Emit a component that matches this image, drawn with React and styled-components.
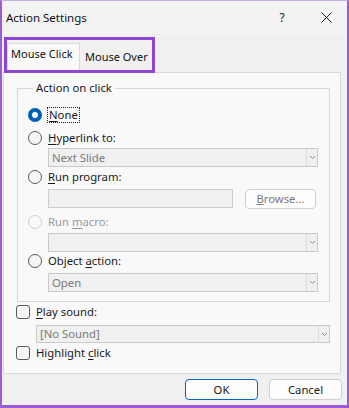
import React from "react";
import styled, { createGlobalStyle } from "styled-components";

const Global = createGlobalStyle`
  html, body { margin: 0; padding: 0; background: #ffffff; }
  body { font-family: "Noto Sans", "Open Sans", sans-serif; }
`;

const purple = "#9b5ad6";

function Radio({ checked, disabled }) {
  return (
    <RadioBox $checked={checked} $disabled={disabled}>
      {checked && <span />}
    </RadioBox>
  );
}

function Select({ value, height }) {
  return (
    <SelectBox $height={height}>
      <span className="value">{value}</span>
      <span className="arrow">
        <svg width="7" height="5" viewBox="0 0 7 5">
          <path d="M1 1 L3.5 3.5 L6 1" fill="none" stroke="#8a8a8a" strokeWidth="1" />
        </svg>
      </span>
    </SelectBox>
  );
}

export default function App() {
  return (
    <>
      <Global />
      <Window>
        <TitleBar>
          <div className="title">Action Settings</div>
          <div className="help">?</div>
          <div className="close">
            <svg width="11" height="11" viewBox="0 0 11 11">
              <path d="M0.5 0.5 L10.5 10.5 M10.5 0.5 L0.5 10.5" stroke="#1a1a1a" strokeWidth="1" />
            </svg>
          </div>
        </TitleBar>

        <TabArea>
          <Tab $active>Mouse Click</Tab>
          <Tab>Mouse Over</Tab>
          <Highlight />
        </TabArea>

        <Panel>
          <Group>
            <Legend>Action on click</Legend>
            <OptionRow>
              <Radio checked />
              <Label $focused><u>N</u>one</Label>
            </OptionRow>
            <OptionRow $gap={5}>
              <Radio />
              <Label><u>H</u>yperlink to:</Label>
            </OptionRow>
            <Indent $gap={1}>
              <Select value="Next Slide" />
            </Indent>
            <OptionRow $gap={1}>
              <Radio />
              <Label><u>R</u>un program:</Label>
            </OptionRow>
            <Indent $gap={3}>
              <ProgramRow>
                <TextInput />
                <Button $small>
                  <u>B</u>rowse...
                </Button>
              </ProgramRow>
            </Indent>
            <OptionRow $gap={4}>
              <Radio disabled />
              <Label $disabled>
                Run <u>m</u>acro:
              </Label>
            </OptionRow>
            <Indent $gap={2}>
              <Select value="" />
            </Indent>
            <OptionRow $gap={0}>
              <Radio />
              <Label>
                Object <u>a</u>ction:
              </Label>
            </OptionRow>
            <Indent $gap={3}>
              <Select value="Open" />
            </Indent>
          </Group>

          <CheckRow $gap={1}>
            <Check />
            <Label><u>P</u>lay sound:</Label>
          </CheckRow>
          <SoundIndent>
            <Select value="[No Sound]" height={18} />
          </SoundIndent>
          <CheckRow $gap={1}>
            <Check />
            <Label>
              Highlight <u>c</u>lick
            </Label>
          </CheckRow>
        </Panel>

        <Footer>
          <Button $primary>OK</Button>
          <Button>Cancel</Button>
        </Footer>
      </Window>
    </>
  );
}

const Window = styled.div`
  box-sizing: border-box;
  width: 349px;
  height: 408px;
  background: #f0f0f0;
  border: 2px solid ${purple};
  border-top: 1px solid #c9b0e8;
  border-bottom-width: 3px;
  display: flex;
  flex-direction: column;
  font-size: 11.3px;
  line-height: 14px;
  color: #1a1a1a;
`;

const TitleBar = styled.div`
  height: 33px;
  flex-shrink: 0;
  display: flex;
  align-items: center;
  background: #f3f3f3;
  padding-left: 4px;

  .title {
    flex: 1;
    font-size: 11.5px;
    color: #111;
  }
  .help {
    width: 20px;
    text-align: center;
    font-size: 12px;
    margin-right: 24px;
  }
  .close {
    width: 20px;
    display: flex;
    justify-content: center;
    align-items: center;
    margin-right: 11px;
  }
`;

const TabArea = styled.div`
  position: relative;
  height: 38px;
  flex-shrink: 0;
  display: flex;
  align-items: flex-end;
  padding-left: 5px;
`;

const Highlight = styled.div`
  position: absolute;
  left: 2px;
  top: 3px;
  width: 151px;
  height: 36px;
  box-sizing: border-box;
  border: 3px solid #8d46cf;
  pointer-events: none;
`;

const Tab = styled.div`
  box-sizing: border-box;
  height: ${(p) => (p.$active ? "29px" : "26px")};
  width: ${(p) => (p.$active ? "73px" : "72px")};
  padding: ${(p) => (p.$active ? "0 0 8px 3px" : "0 0 5px 4px")};
  display: flex;
  align-items: center;
  white-space: nowrap;
  overflow: visible;
  background: ${(p) => (p.$active ? "#f9f9f9" : "#f0f0f0")};
  border: 1px solid ${(p) => (p.$active ? "#dadada" : "transparent")};
  border-bottom: none;
  font-size: 11px;
  color: #111;
`;

const Panel = styled.div`
  box-sizing: border-box;
  margin: 0 6px 0 1px;
  height: 302px;
  flex-shrink: 0;
  background: #f9f9f9;
  border: 1px solid #d9d9d9;
  padding: 8px 10px 0 13px;
  display: flex;
  flex-direction: column;
`;

const Group = styled.fieldset`
  margin: 0;
  padding: 11px 11px 9px 10px;
  border: 1px solid #d6d6d6;
  border-radius: 0;
  display: flex;
  flex-direction: column;
  min-width: 0;
`;

const Legend = styled.legend`
  padding: 0 3px;
  margin-left: 5px;
  font-size: 11.3px;
  line-height: 14px;
  color: #1a1a1a;
`;

const OptionRow = styled.div`
  display: flex;
  align-items: center;
  gap: 6px;
  height: 18px;
  margin-top: ${(p) => p.$gap || 0}px;
`;

const RadioBox = styled.div`
  box-sizing: border-box;
  width: 14px;
  height: 14px;
  flex-shrink: 0;
  border-radius: 50%;
  border: ${(p) =>
    p.$checked ? "none" : p.$disabled ? "1px solid #cfcfcf" : "1px solid #5a5a5a"};
  background: ${(p) => (p.$checked ? "#005fb8" : p.$disabled ? "#f9f9f9" : "#f6f6f6")};
  display: flex;
  align-items: center;
  justify-content: center;

  span {
    width: 6px;
    height: 6px;
    border-radius: 50%;
    background: #fff;
  }
`;

const Label = styled.span`
  font-size: 11.3px;
  line-height: 14px;
  color: ${(p) => (p.$disabled ? "#9a9a9a" : "#1a1a1a")};
  ${(p) => (p.$focused ? "outline: 1px dotted #222; outline-offset: 0; padding: 0 1px;" : "")}
  u {
    text-decoration-thickness: 1px;
    text-underline-offset: 2px;
  }
`;

const Indent = styled.div`
  padding-left: 20px;
  margin-top: ${(p) => p.$gap || 0}px;
`;

const SelectBox = styled.div`
  box-sizing: border-box;
  height: ${(p) => p.$height || 19}px;
  width: 100%;
  background: #f0f0f0;
  border: 1px solid #c9c9c9;
  display: flex;
  align-items: center;
  font-size: 11.3px;
  color: #7a7a7a;

  .value {
    flex: 1;
    padding-left: 3px;
  }
  .arrow {
    width: 10px;
    height: 100%;
    display: flex;
    align-items: center;
    justify-content: center;
    border-left: 1px solid #dcdcdc;
  }
`;

const ProgramRow = styled.div`
  display: flex;
  align-items: flex-start;
  gap: 12px;
`;

const TextInput = styled.div`
  box-sizing: border-box;
  width: 185px;
  height: 19px;
  background: #f0f0f0;
  border: 1px solid #cdcdcd;
`;

const Button = styled.div`
  box-sizing: border-box;
  width: ${(p) => (p.$small ? "71px" : "73px")};
  height: ${(p) => (p.$small ? "20px" : "21px")};
  border-radius: 4px;
  border: 1px solid ${(p) => (p.$primary ? "#0067c0" : "#d0d0d0")};
  background: #fdfdfd;
  display: flex;
  align-items: center;
  justify-content: center;
  font-size: 11.3px;
  color: ${(p) => (p.$small ? "#7a7a7a" : "#1a1a1a")};
`;

const CheckRow = styled.div`
  display: flex;
  align-items: center;
  gap: 6px;
  height: 18px;
  margin-top: ${(p) => p.$gap || 0}px;
  margin-left: -1px;
`;

const Check = styled.div`
  box-sizing: border-box;
  width: 14px;
  height: 14px;
  flex-shrink: 0;
  border-radius: 3px;
  border: 1px solid #5a5a5a;
  background: #f6f6f6;
`;

const SoundIndent = styled.div`
  padding-left: 19px;
  margin-top: 4px;
`;

const Footer = styled.div`
  display: flex;
  justify-content: flex-end;
  gap: 11px;
  padding: 5px 5px 0 0;
`;
